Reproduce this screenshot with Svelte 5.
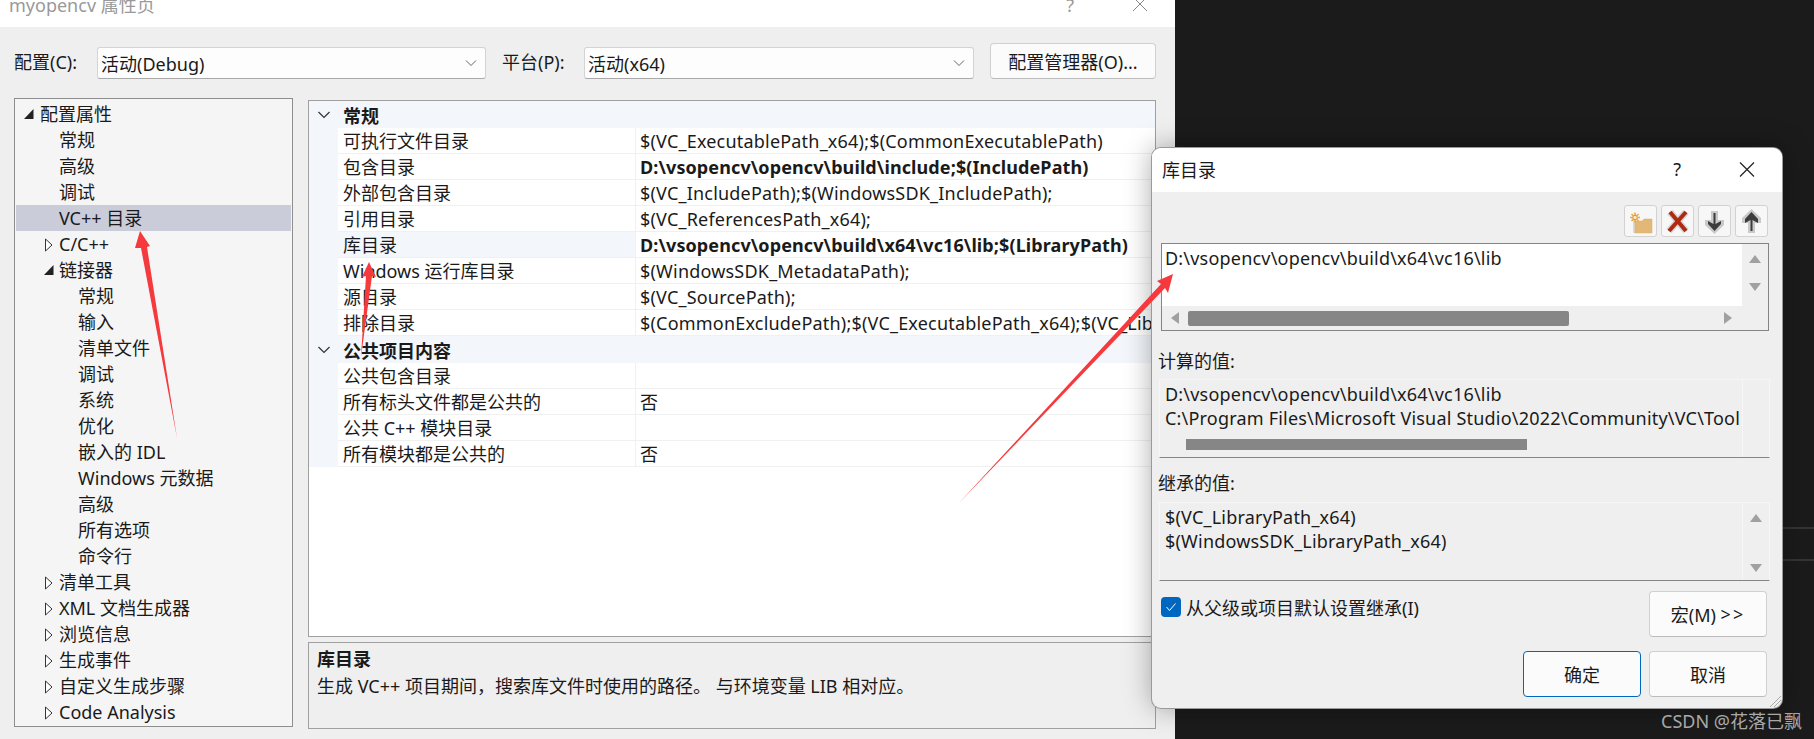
<script lang="ts">
    const TREE = [
        { t: "配置属性", lv: 0, ar: "open" },
        { t: "常规", lv: 1 },
        { t: "高级", lv: 1 },
        { t: "调试", lv: 1 },
        { t: "VC++ 目录", lv: 1, sel: true },
        { t: "C/C++", lv: 1, ar: "shut" },
        { t: "链接器", lv: 1, ar: "open" },
        { t: "常规", lv: 2 },
        { t: "输入", lv: 2 },
        { t: "清单文件", lv: 2 },
        { t: "调试", lv: 2 },
        { t: "系统", lv: 2 },
        { t: "优化", lv: 2 },
        { t: "嵌入的 IDL", lv: 2 },
        { t: "Windows 元数据", lv: 2 },
        { t: "高级", lv: 2 },
        { t: "所有选项", lv: 2 },
        { t: "命令行", lv: 2 },
        { t: "清单工具", lv: 1, ar: "shut" },
        { t: "XML 文档生成器", lv: 1, ar: "shut" },
        { t: "浏览信息", lv: 1, ar: "shut" },
        { t: "生成事件", lv: 1, ar: "shut" },
        { t: "自定义生成步骤", lv: 1, ar: "shut" },
        { t: "Code Analysis", lv: 1, ar: "shut" },
    ];

    const GROUPS = [
        {
            name: "常规",
            rows: [
                ["可执行文件目录", "$(VC_ExecutablePath_x64);$(CommonExecutablePath)"],
                ["包含目录", "D:\\vsopencv\\opencv\\build\\include;$(IncludePath)", "b"],
                ["外部包含目录", "$(VC_IncludePath);$(WindowsSDK_IncludePath);"],
                ["引用目录", "$(VC_ReferencesPath_x64);"],
                ["库目录", "D:\\vsopencv\\opencv\\build\\x64\\vc16\\lib;$(LibraryPath)", "b", "s"],
                ["Windows 运行库目录", "$(WindowsSDK_MetadataPath);"],
                ["源目录", "$(VC_SourcePath);"],
                ["排除目录", "$(CommonExcludePath);$(VC_ExecutablePath_x64);$(VC_LibraryPath_x64);"],
            ],
        },
        {
            name: "公共项目内容",
            rows: [
                ["公共包含目录", ""],
                ["所有标头文件都是公共的", "否"],
                ["公共 C++ 模块目录", ""],
                ["所有模块都是公共的", "否"],
            ],
        },
    ];
</script>

<div class="page">
    <div class="win">
        <div class="title">
            <span class="cap">myopencv 属性页</span>
            <span class="q">?</span>
            <svg class="x" width="16" height="12" viewBox="0 0 16 12"><path d="M1 -3 L15 11 M15 -3 L1 11" stroke="#888" fill="none" /></svg>
        </div>

        <div class="cfg">
            <span class="lab">配置(C):</span>
            <div class="sel one">
                活动(Debug)
                <svg width="12" height="8" viewBox="0 0 12 8"><path d="M1 1.5 L6 6.5 L11 1.5" stroke="#666" fill="none" /></svg>
            </div>
            <span class="lab two">平台(P):</span>
            <div class="sel plat">
                活动(x64)
                <svg width="12" height="8" viewBox="0 0 12 8"><path d="M1 1.5 L6 6.5 L11 1.5" stroke="#666" fill="none" /></svg>
            </div>
            <div class="btn mgr">配置管理器(O)...</div>
        </div>

        <div class="cols">
            <div class="tree">
                {#each TREE as n}
                    <div class="node lv{n.lv}" class:on={n.sel}>
                        {#if n.ar === "open"}
                            <svg class="ar" width="10" height="12" viewBox="0 0 10 12"><path d="M9.5 1 V11 H0 Z" fill="#222" /></svg>
                        {:else if n.ar === "shut"}
                            <svg class="ar" width="10" height="14" viewBox="0 0 10 14"><path d="M1.5 1 L8 7 L1.5 13 Z" fill="#fff" stroke="#333" /></svg>
                        {/if}
                        <span>{n.t}</span>
                    </div>
                {/each}
            </div>

            <div class="right">
                <div class="props">
                    {#each GROUPS as g}
                        <div class="group">
                            <svg width="12" height="8" viewBox="0 0 12 8"><path d="M0.5 1 L6 6.5 L11.5 1" stroke="#333" stroke-width="1.2" fill="none" /></svg>
                            <b>{g.name}</b>
                        </div>
                        {#each g.rows as r}
                            <div class="row">
                                <span class="gut"></span>
                                <span class="name" class:cur={r[3] === "s"}>{r[0]}</span>
                                <span class="val" class:bold={r[2] === "b"}>{r[1]}</span>
                            </div>
                        {/each}
                    {/each}
                </div>
                <div class="desc">
                    <b>库目录</b>
                    <span>生成 VC++ 项目期间，搜索库文件时使用的路径。 与环境变量 LIB 相对应。</span>
                </div>
            </div>
        </div>
    </div>

    <div class="rule r1"></div>
    <div class="rule r2"></div>

    <div class="dlg">
        <div class="dhead">
            <span>库目录</span>
            <span class="dq">?</span>
            <svg width="16" height="15" viewBox="0 0 16 15"><path d="M1 0.5 L15 14.5 M15 0.5 L1 14.5" stroke="#222" stroke-width="1.2" fill="none" /></svg>
        </div>

        <div class="tools">
            <div class="tool">
                <svg width="31" height="30" viewBox="0 0 31 30">
                    <path d="M9 12 V27" stroke="#bbb" fill="none" />
                    <path d="M10 15 H17 L19 13 H27 V27 H10 Z" fill="#e3b877" stroke="#d9ad6c" stroke-width="0.5" />
                    <g stroke="#eaa94e" stroke-width="1.6">
                        <path d="M10 6.5 V16.5 M5 11.5 H15 M6.5 8 L13.5 15 M13.5 8 L6.5 15" />
                    </g>
                    <circle cx="10" cy="11.5" r="2.2" fill="#ffe9b0" stroke="#d98a20" stroke-width="0.8" />
                </svg>
            </div>
            <div class="tool">
                <svg width="31" height="30" viewBox="0 0 31 30">
                    <path d="M8 6 L24 25 M24 6 L7 25" stroke="#d6d6d6" stroke-width="7" fill="none" />
                    <path d="M8 6 L24 25 M24 6 L7 25" stroke="#b02a10" stroke-width="4" fill="none" />
                </svg>
            </div>
            <div class="tool">
                <svg width="31" height="30" viewBox="0 0 31 30">
                    <path d="M12 5 H19 V14 H25 V19 L15.5 28 L6 19 V14 H12 Z" fill="#c9c9c9" />
                    <path d="M14.5 7 H16.5 V18 L22 15 V18 L15.5 25 L9 18 V15 L14.5 18 Z" fill="#3c3c3c" />
                </svg>
            </div>
            <div class="tool">
                <svg width="31" height="30" viewBox="0 0 31 30">
                    <path d="M12 27 H19 V17 H25 V12 L15.5 3 L6 12 V17 H12 Z" fill="#c9c9c9" />
                    <path d="M14.5 25 H16.5 V14 L22 17 V13 L15.5 6 L9 13 V17 L14.5 14 Z" fill="#3c3c3c" />
                </svg>
            </div>
        </div>

        <div class="editor">
            <div class="etext">D:\vsopencv\opencv\build\x64\vc16\lib</div>
            <div class="vbar ev">
                <i class="tri up"></i>
                <i class="tri down"></i>
            </div>
            <div class="hbar">
                <i class="tri left"></i>
                <div class="thumb"></div>
                <i class="tri rt"></i>
            </div>
        </div>

        <div class="dlab">计算的值:</div>
        <div class="ro">
            <div class="rotext">
                <div>D:\vsopencv\opencv\build\x64\vc16\lib</div>
                <div class="clip">C:\Program Files\Microsoft Visual Studio\2022\Community\VC\Tools</div>
                <div class="rothumb"></div>
            </div>
            <div class="vbar"></div>
        </div>

        <div class="dlab second">继承的值:</div>
        <div class="ro">
            <div class="rotext">
                <div>$(VC_LibraryPath_x64)</div>
                <div>$(WindowsSDK_LibraryPath_x64)</div>
            </div>
            <div class="vbar rov">
                <i class="tri up"></i>
                <i class="tri down"></i>
            </div>
        </div>

        <div class="inherit">
            <div class="check">
                <span class="box">
                    <svg width="12" height="10" viewBox="0 0 12 10"><path d="M1.5 5 L4.5 8.5 L10.5 1.5" stroke="#fff" fill="none" /></svg>
                </span>
                <span>从父级或项目默认设置继承(I)</span>
            </div>
            <div class="btn act">宏(M)&nbsp;<span class="gt">&gt;&gt;</span></div>
        </div>

        <div class="actions">
            <div class="btn act def">确定</div>
            <div class="btn act">取消</div>
        </div>

        <svg class="grip" width="14" height="14" viewBox="0 0 14 14"><path d="M13 2 L2 13 M13 6 L6 13 M13 10 L10 13" stroke="#aaa" fill="none" /></svg>
    </div>

    <span class="mark">CSDN @花落已飘</span>

    <!-- 红色箭头盖在所有窗口之上 -->
    <svg class="arrows" width="1814" height="739" viewBox="0 0 1814 739">
        <path d="M140 231 L150 246 L147 247 L177 438 L141 248 L135 248 Z" />
        <path d="M369 262 L376 277 L372 276 L361 357 L366 276 L362 277 Z" />
        <path d="M1173 274 L1168 293 L1165 288 L958 504 L1161 284 L1157 281 Z" />
    </svg>
</div>

<style>
    :global(body) {
        background: #1b1b1b;
    }

    .page {
        position: relative;
        width: 1814px;
        height: 739px;
        overflow: hidden;
        background: #1b1b1b;
        font-family: "Noto Sans", "Noto Sans CJK SC", sans-serif;
        font-size: 18px;
        color: #1a1a1a;
    }

    .win {
        width: 1175px;
        height: 739px;
        background: #efefef;
    }

    .title {
        height: 27px;
        background: #fff;
        display: flex;
        line-height: 10px;
        color: #999;
        padding-left: 9px;
    }

    .cap {
        flex: 1;
    }

    .q {
        margin-right: 58px;
    }

    .x {
        margin-right: 27px;
    }

    .cfg {
        display: flex;
        align-items: flex-end;
        height: 52px;
        padding-left: 14px;
    }

    .lab {
        width: 83px;
        line-height: 30px;
        padding-bottom: 2px;
    }

    .lab.two {
        width: 82px;
        margin-left: 16px;
    }

    .sel {
        display: flex;
        align-items: center;
        justify-content: space-between;
        height: 32px;
        box-sizing: border-box;
        padding: 0 8px 1px 3px;
        background: #fdfdfd;
        border: 1px solid #d4d4d4;
        border-bottom-color: #a8a8a8;
        border-radius: 3px;
    }

    .one {
        width: 389px;
    }

    .plat {
        width: 390px;
    }

    .btn {
        display: flex;
        align-items: center;
        justify-content: center;
        box-sizing: border-box;
        background: #fbfbfb;
        border: 1px solid #d0d0d0;
        border-bottom-color: #bcbcbc;
        border-radius: 4px;
    }

    .mgr {
        width: 166px;
        height: 36px;
        margin-left: 16px;
    }

    .cols {
        display: grid;
        grid-template-columns: 279px 848px;
        gap: 15px;
        margin-top: 19px;
        padding-left: 14px;
    }

    .tree {
        height: 629px;
        box-sizing: border-box;
        padding: 2px 1px;
        background: #f5f5f5;
        border: 1px solid #8e8e8e;
    }

    .node {
        position: relative;
        height: 26px;
        line-height: 26px;
        white-space: nowrap;
    }

    .node.on {
        background: #cbccda;
    }

    .lv0 {
        padding-left: 24px;
    }

    .lv1 {
        padding-left: 43px;
    }

    .lv2 {
        padding-left: 62px;
    }

    .ar {
        position: absolute;
        top: 7px;
        left: -2px;
    }

    .lv0 .ar {
        left: 8px;
    }

    .lv1 .ar {
        left: 28px;
    }

    .right {
        padding-top: 2px;
    }

    .props {
        height: 537px;
        box-sizing: border-box;
        background: #fff;
        border: 1px solid #a0a0a0;
    }

    .group {
        display: flex;
        align-items: center;
        height: 27px;
        padding-left: 9px;
        background: #f3f6fb;
    }

    .group b {
        margin-left: 13px;
    }

    .row {
        display: grid;
        grid-template-columns: 29px 298px 1fr;
        height: 26px;
        line-height: 26px;
        white-space: nowrap;
    }

    .gut {
        background: #f3f6fb;
    }

    .name {
        padding-left: 5px;
        border-bottom: 1px solid #f0f0f0;
        border-right: 1px solid #f0f0f0;
        overflow: hidden;
    }

    .name.cur {
        background: #f3f6fb;
    }

    .val {
        padding-left: 4px;
        letter-spacing: 0.2px;
        border-bottom: 1px solid #f0f0f0;
        overflow: hidden;
    }

    .bold {
        font-weight: 700;
        letter-spacing: 0.1px;
    }

    .desc {
        display: flex;
        flex-direction: column;
        height: 87px;
        box-sizing: border-box;
        margin-top: 5px;
        padding: 3px 8px;
        line-height: 27px;
        background: #efefef;
        border: 1px solid #a0a0a0;
    }

    .rule {
        position: absolute;
        left: 1775px;
        width: 39px;
        height: 2px;
        background: #343434;
    }

    .r1 {
        top: 527px;
    }

    .r2 {
        top: 559px;
    }

    .dlg {
        position: absolute;
        left: 1152px;
        top: 148px;
        width: 630px;
        height: 560px;
        overflow: visible;
        background: #efefef;
        border-radius: 9px;
        box-shadow: 0 0 0 1px #9a9a9a, 0 0 28px rgba(0, 0, 0, 0.35);
    }

    .dhead {
        display: flex;
        align-items: center;
        height: 44px;
        box-sizing: border-box;
        padding: 0 0 2px 10px;
        background: #fff;
        border-radius: 9px 9px 0 0;
    }

    .dhead span:first-child {
        flex: 1;
    }

    .dq {
        margin-right: 58px;
    }

    .dhead svg {
        margin-right: 27px;
    }

    .tools {
        display: flex;
        justify-content: flex-end;
        gap: 4px;
        margin-top: 13px;
        padding-right: 14px;
    }

    .tool {
        width: 33px;
        height: 32px;
        box-sizing: border-box;
        background: #f7f7f7;
        border: 1px solid #d2d2d2;
        border-radius: 3px;
    }

    .tool svg {
        display: block;
    }

    .editor {
        display: grid;
        grid-template-columns: 1fr 26px;
        grid-template-rows: 62px 1fr;
        height: 88px;
        box-sizing: border-box;
        margin: 6px 13px 0 9px;
        border: 1px solid #858585;
    }

    .etext {
        padding-left: 3px;
        line-height: 28px;
        letter-spacing: 0.2px;
        background: #fff;
    }

    .vbar {
        display: flex;
        flex-direction: column;
        align-items: center;
    }

    .ev {
        gap: 20px;
        padding-top: 11px;
    }

    .tri {
        display: block;
        width: 0;
        height: 0;
        border-style: solid;
        border-color: transparent;
    }

    .up {
        border-width: 0 6px 8px;
        border-bottom-color: #a0a0a0;
    }

    .down {
        border-width: 8px 6px 0;
        border-top-color: #a0a0a0;
    }

    .left {
        border-width: 6px 8px 6px 0;
        border-right-color: #a0a0a0;
    }

    .rt {
        border-width: 6px 0 6px 8px;
        border-left-color: #a0a0a0;
        margin-left: 155px;
    }

    .hbar {
        grid-column: 1 / 3;
        display: flex;
        align-items: center;
        padding-left: 9px;
    }

    .thumb {
        width: 381px;
        height: 15px;
        margin-left: 9px;
        background: #868686;
        border-radius: 2px;
    }

    .dlab {
        margin: 17px 0 5px 6px;
        line-height: 26px;
    }

    .second {
        margin: 12px 0 6px 6px;
    }

    .ro {
        display: grid;
        grid-template-columns: 1fr 26px;
        height: 79px;
        box-sizing: border-box;
        margin: 0 12px 0 7px;
        border: 1px solid #f6f6f6;
        border-bottom-color: #858585;
        overflow: hidden;
    }

    .rotext {
        padding: 2px 0 0 5px;
        line-height: 24px;
        letter-spacing: 0.2px;
        white-space: nowrap;
        overflow: hidden;
        border-right: 1px solid #f6f6f6;
    }

    .clip {
        width: 574px;
        overflow: hidden;
    }

    .rothumb {
        width: 341px;
        height: 11px;
        margin: 9px 0 0 21px;
        background: #868686;
    }

    .rov {
        justify-content: space-between;
        padding: 11px 0 8px;
    }

    .inherit {
        display: flex;
        justify-content: space-between;
        margin-top: 10px;
        padding: 0 15px 0 9px;
    }

    .check {
        display: flex;
        align-items: center;
        gap: 5px;
        height: 20px;
        margin-top: 6px;
    }

    .box {
        display: flex;
        align-items: center;
        justify-content: center;
        width: 20px;
        height: 20px;
        background: #0067c0;
        border-radius: 4px;
    }

    .act {
        width: 118px;
        height: 46px;
    }

    .gt {
        letter-spacing: 2px;
    }

    .actions {
        display: flex;
        justify-content: flex-end;
        gap: 8px;
        margin-top: 14px;
        padding-right: 15px;
    }

    .def {
        border: 1px solid #0067c0;
    }

    .grip {
        position: absolute;
        right: 0;
        bottom: 0;
    }

    .mark {
        position: absolute;
        left: 1661px;
        top: 707px;
        color: #a8a8a8;
        white-space: nowrap;
    }

    .arrows {
        position: absolute;
        left: 0;
        top: 0;
        pointer-events: none;
    }

    .arrows path {
        fill: #f5393d;
    }
</style>
